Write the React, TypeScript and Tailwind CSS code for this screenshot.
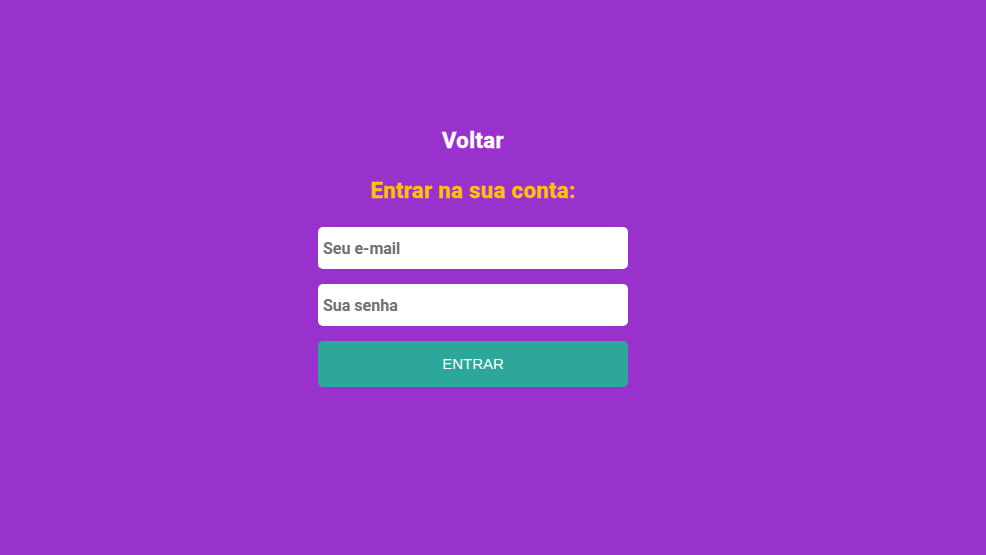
export default function App() {
  return (
    <div className="min-h-[555px] w-full bg-[#9932cc] flex flex-col items-center pt-[128px] pr-[40px]">
      <a
        href="#"
        className="text-white text-[22px] font-bold leading-[26px] tracking-[0.4px] [-webkit-text-stroke:0.4px_white] [font-family:Roboto,'Liberation_Sans',sans-serif]"
      >
        Voltar
      </a>
      <h2 className="mt-[24px] text-[#ffc107] text-[22px] font-bold leading-[26px] tracking-[0.4px] [-webkit-text-stroke:0.4px_#ffc107] [font-family:Roboto,'Liberation_Sans',sans-serif]">
        Entrar na sua conta:
      </h2>
      <form className="mt-[23px] w-[310px] flex flex-col">
        <input
          type="email"
          placeholder="Seu e-mail"
          className="h-[42px] w-full rounded-[5px] bg-white px-[5px] text-[16px] font-bold text-[#666] placeholder:text-[#707070] outline-none [font-family:Roboto,sans-serif]"
        />
        <input
          type="password"
          placeholder="Sua senha"
          className="mt-[15px] h-[42px] w-full rounded-[5px] bg-white px-[5px] text-[16px] font-bold text-[#666] placeholder:text-[#707070] outline-none [font-family:Roboto,sans-serif]"
        />
        <button
          type="button"
          className="mt-[15px] h-[46px] w-full rounded-[5px] bg-[#2ca79a] text-white text-[15px] [font-family:'Liberation_Sans',Arial,sans-serif]"
        >
          ENTRAR
        </button>
      </form>
    </div>
  );
}
